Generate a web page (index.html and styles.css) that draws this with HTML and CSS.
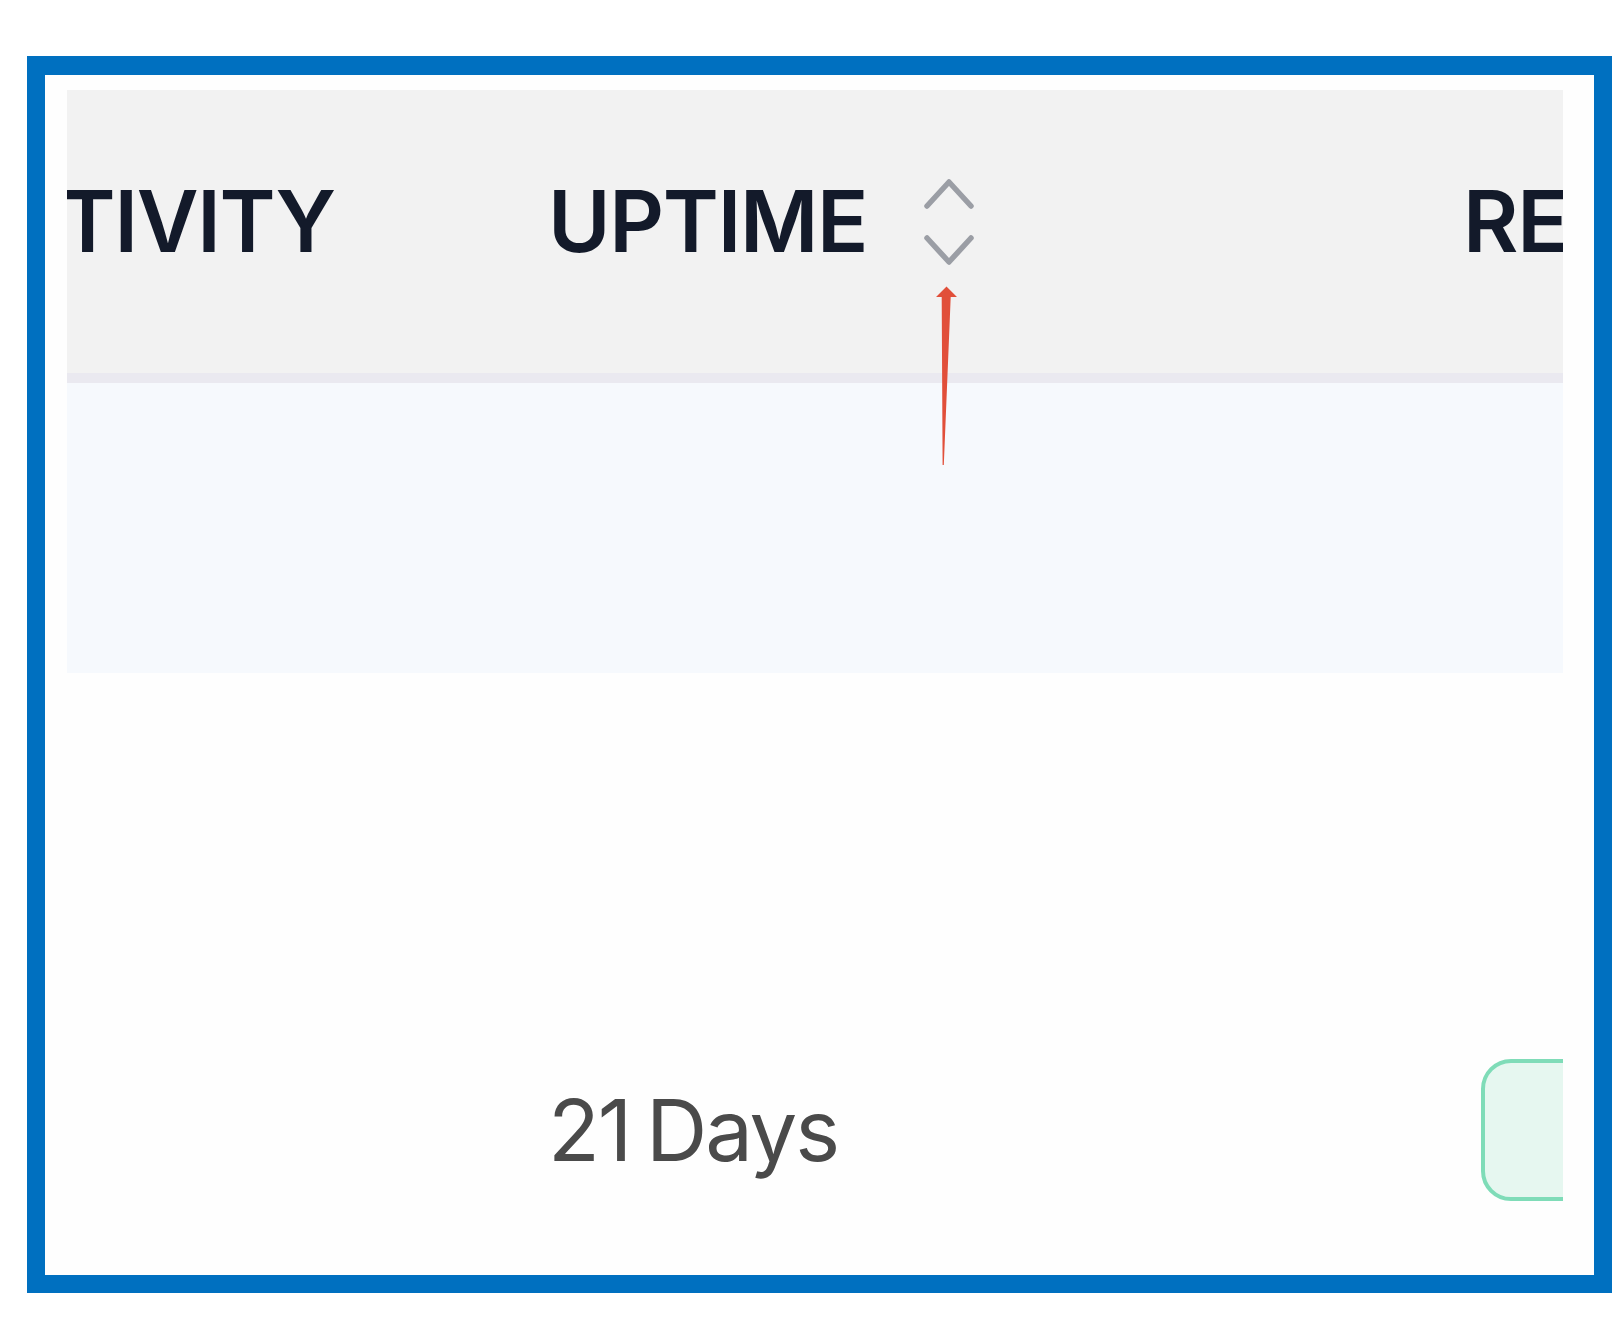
FILE: index.html
```html
<!DOCTYPE html>
<html>
<head>
  <link rel="stylesheet" href="styles.css">
</head>
<body>
  <div class="frame">
    <div class="table-scroll">
      <div class="table">
        <div class="row head">
          <div class="cell">ACTIVITY</div>
          <div class="cell">
            <span>UPTIME</span>
            <svg class="sort" width="50" height="90" viewBox="0 0 50 90">
              <polyline points="3,30 25,6 47,30" />
              <polyline points="3,62 25,86 47,62" />
            </svg>
          </div>
          <div class="cell">RESPONSE</div>
        </div>
        <div class="row stripe">
          <div class="cell"></div>
          <div class="cell"></div>
          <div class="cell"></div>
        </div>
        <div class="row">
          <div class="cell"></div>
          <div class="cell days">21 Days</div>
          <div class="cell"><span class="badge">Healthy</span></div>
        </div>
      </div>
    </div>

    <!-- annotation pointing at the sort control -->
    <svg class="callout" width="24" height="182" viewBox="0 0 24 182">
      <polygon points="12.5,1.5 23,12 16.7,12 9.8,180 8.6,180 7.7,12 2,12" />
    </svg>
  </div>
</body>
</html>
```

FILE: styles.css
```css
body {
  margin: 0;
  background: #fff;
  font-family: Inter, "Liberation Sans", sans-serif;
}

.frame {
  position: relative;
  box-sizing: border-box;
  width: 1585px;
  height: 1237px;
  margin: 56px 0 0 27px;
  border: 18px solid #0070c0;
  border-top-width: 19px;
  padding: 15px 31px 0 22px;
  background: #fefefe;
  overflow: hidden;
}

.table-scroll {
  height: 100%;
  overflow: hidden;
}

.table {
  width: 2023px;
  margin-left: -166px;
}

.row {
  display: grid;
  grid-template-columns: 607px 915px 501px;
  height: 914px;
}

.cell {
  display: flex;
  align-items: center;
  padding-left: 40px;
  line-height: 1;
}

.head {
  height: 283px;
  background: #f2f2f2;
  border-bottom: 10px solid #eae9f0;
  font-size: 85px;
  font-weight: 600;
  color: #131a2a;
  letter-spacing: -0.015em;
}

.head .cell {
  padding-bottom: 21px;
}

.sort {
  margin-left: 57px;
  fill: none;
  stroke: #9b9ea5;
  stroke-width: 5.5;
  stroke-linecap: round;
  stroke-linejoin: round;
}

.stripe {
  height: 290px;
  background: #f6f9fd;
}

.days {
  font-size: 85px;
  color: #4a4a4a;
  letter-spacing: -0.025em;
  word-spacing: -6px;
}

.badge {
  box-sizing: border-box;
  width: 520px;
  height: 142px;
  margin-left: 18px;
  border: 4px solid #7fdcb8;
  border-radius: 30px;
  background: #e6f7f0;
  color: #1f9d6a;
  font-size: 60px;
  display: flex;
  align-items: center;
  justify-content: center;
}

.callout {
  position: absolute;
  left: 889px;
  top: 210px;
  fill: #e14f3a;
}
```
